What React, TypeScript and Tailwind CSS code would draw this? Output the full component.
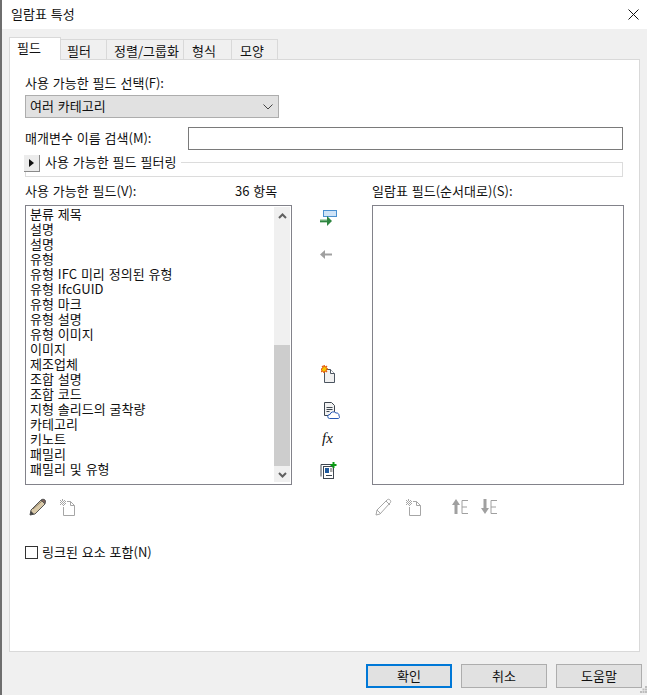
const FONT = "font-['Noto_Sans_CJK_KR','Noto_Sans',sans-serif]";

const availableFields = [
  "분류 제목",
  "설명",
  "설명",
  "유형",
  "유형 IFC 미리 정의된 유형",
  "유형 IfcGUID",
  "유형 마크",
  "유형 설명",
  "유형 이미지",
  "이미지",
  "제조업체",
  "조합 설명",
  "조합 코드",
  "지형 솔리드의 굴착량",
  "카테고리",
  "키노트",
  "패밀리",
  "패밀리 및 유형",
];

const tabs = [
  { label: "필터", width: "w-[47px] pl-[6px]" },
  { label: "정렬/그룹화", width: "w-[78px] pl-[7px]" },
  { label: "형식", width: "w-[49px] pl-[8px]" },
  { label: "모양", width: "w-[47px] pl-[8px]" },
];

function PencilIcon({ muted }: { muted?: boolean }) {
  if (muted) {
    return (
      <svg width="18" height="18" viewBox="0 0 18 18" fill="none">
        <path d="M1 17l1-5L12 2c1-1 2-1 3 0s1 2 0 3L5 16z" stroke="#a6a6a6" fill="#fff" />
        <path d="M2 12l4 4M11 3l4 4" stroke="#a6a6a6" />
      </svg>
    );
  }
  return (
    <svg width="18" height="18" viewBox="0 0 18 18" fill="none">
      <path d="M1 17l1-5L12 2l4 4L6 16z" fill="#d9c9a8" stroke="#555" />
      <path d="M12 2c1-1 3-1 4 0s0 3 0 4z" fill="#7d5f55" stroke="#555" />
      <path d="M4 11L13 3" stroke="#8a7a60" />
      <path d="M1 17l1-4 3 3z" fill="#444" />
    </svg>
  );
}

function DeleteDocIcon() {
  return (
    <svg width="15" height="17" viewBox="0 0 15 17" fill="none">
      <path d="M7 2.500h3.500l4 4v10h-11V8" stroke="#a6a6a6" fill="#fff" />
      <path d="M10.500 2.500v4h4" stroke="#a6a6a6" />
      <path d="M0 1h1v1H0zM2 1h1v1H2zM4 1h1v1H4zM1 2h1v1H1zM3 2h1v1H3zM5 2h1v1H5zM0 3h1v1H0zM2 3h1v1H2zM4 3h1v1H4zM1 4h1v1H1zM3 4h1v1H3zM5 4h1v1H5zM0 5h1v1H0zM2 5h1v1H2zM4 5h1v1H4zM2 0h1v1H2zM3 6h1v1H3z" fill="#a6a6a6" />
    </svg>
  );
}

function MoveUpIcon({ down }: { down?: boolean }) {
  return (
    <svg width="17" height="16" viewBox="0 0 17 16" fill="none">
      {down ? (
        <path d="M2.500 0h3v9H8l-4 6-4-6h2.500z" fill="#a0a0a0" />
      ) : (
        <path d="M4 0l4 6H5.500v9h-3V6H0z" fill="#a0a0a0" />
      )}
      <path d="M16 1.500h-6v13h6M10 8h5" stroke="#a0a0a0" />
    </svg>
  );
}

function IconRow({ children, className }: { children: React.ReactNode; className?: string }) {
  return <div className={`flex items-center ${className ?? ""}`}>{children}</div>;
}

export default function App() {
  return (
    <div className={`relative flex h-[695px] w-[647px] flex-col overflow-hidden border-l-2 border-[#6e6e6e] bg-[#f0f0f0] text-[13px] leading-[15px] text-[#111] [word-spacing:1px] ${FONT}`}>
      <div className="flex h-[29px] shrink-0 items-center justify-between bg-white pb-[2px] pl-[9px] pr-[8px]">
        <span>일람표 특성</span>
        <svg className="mt-[2px]" width="11" height="11" viewBox="0 0 11 11" fill="none">
          <path d="M0.500 0.500l10 10M10.500 0.500l-10 10" stroke="#111" />
        </svg>
      </div>

      <div className="ml-[7px] mt-[8px] flex h-[23px] shrink-0 items-end">
        <div className="relative z-10 flex h-[23px] w-[52px] items-center border border-b-0 border-[#d9d9d9] bg-white pb-[3px] pl-[7px]">
          필드
        </div>
        {tabs.map((tab) => (
          <div
            key={tab.label}
            className={`-ml-px flex h-[21px] items-center border border-b-0 border-[#d9d9d9] bg-[#f0f0f0] ${tab.width}`}
          >
            {tab.label}
          </div>
        ))}
      </div>

      <div className="-mt-px ml-[7px] h-[593px] w-[631px] shrink-0 border border-[#d9d9d9] bg-white pl-[15px] pt-[15px]">
        <p className="h-[15px]">사용 가능한 필드 선택(F):</p>
        <div className="mt-[5px] flex h-[23px] w-[254px] items-center justify-between border border-[#adadad] bg-[#e1e1e1] pl-[4px] pr-[5px]">
          <span className="pb-[2px]">여러 카테고리</span>
          <svg width="10" height="6" viewBox="0 0 10 6" fill="none">
            <path d="M0.500 0.500L5 5l4.500-4.500" stroke="#444" />
          </svg>
        </div>

        <div className="mt-[9px] flex h-[23px] items-center">
          <span className="w-[163px] pb-[2px]">매개변수 이름 검색(M):</span>
          <div className="h-[23px] w-[435px] border border-[#7a7a7a] bg-white" />
        </div>

        <div className="relative mt-[12px] h-[15px] w-[598px]">
          <div className="absolute left-[-1px] top-[-7px] z-10 flex h-[17px] w-[16px] items-center justify-center border-b border-r border-[#8a8a8a] bg-[#ececec]">
            <svg width="5" height="8" viewBox="0 0 5 8">
              <path d="M0 0l5 4-5 4z" fill="#111" />
            </svg>
          </div>
          <div className="absolute left-0 top-0 h-[15px] w-full border border-[#dcdcdc]" />
          <span className="absolute left-[15px] top-[-8px] bg-white px-[5px]">사용 가능한 필드 필터링</span>
        </div>

        <div className="mt-[7px] flex h-[15px] items-center pb-[2px]">
          <span className="w-[210px]">사용 가능한 필드(V):</span>
          <span className="w-[137px]">36 항목</span>
          <span>일람표 필드(순서대로)(S):</span>
        </div>

        <div className="mt-[6px] flex h-[280px] items-stretch">
          <div className="flex w-[267px] justify-between border border-[#82828a] bg-white pl-[4px] pr-[1px]">
            <ul>
              {availableFields.map((field, i) => (
                <li key={i} className="h-[15px] whitespace-nowrap">
                  {field}
                </li>
              ))}
            </ul>
            <div className="mb-[2px] mt-[1px] flex w-[16px] flex-col bg-[#f0f0f0]">
              <div className="flex h-[17px] shrink-0 items-center justify-center">
                <svg width="9" height="6" viewBox="0 0 9 6" fill="none">
                  <path d="M1 5l3.500-3.500L8 5" stroke="#606060" strokeWidth="2" />
                </svg>
              </div>
              <div className="mt-[121px] h-[121px] shrink-0 bg-[#cdcdcd]" />
              <div className="flex h-[17px] shrink-0 items-center justify-center">
                <svg width="9" height="6" viewBox="0 0 9 6" fill="none">
                  <path d="M1 1l3.500 3.500L8 1" stroke="#606060" strokeWidth="2" />
                </svg>
              </div>
            </div>
          </div>

          <div className="flex w-[80px] flex-col pl-[28px]">
            <svg className="mt-[5px]" width="17" height="17" viewBox="0 0 17 17" fill="none">
              <rect x="3.500" y="0.500" width="13" height="6" fill="#cfe3f7" stroke="#4a90d0" />
              <path d="M0 11h9" stroke="#6fae78" strokeWidth="3" />
              <path d="M7 6l5 5-5 5z" fill="#2e8540" />
              <path d="M0 11.500h9" stroke="#2e8540" />
            </svg>
            <svg className="mt-[23px]" width="12" height="9" viewBox="0 0 12 9" fill="none">
              <path d="M5 0v9L0 4.500z" fill="#a0a0a0" />
              <path d="M4 4.500h8" stroke="#a0a0a0" strokeWidth="2" />
            </svg>
            <svg className="ml-[1px] mt-[106px]" width="15" height="18" viewBox="0 0 15 18" fill="none">
              <path d="M3.500 4.500h6l4 4v9h-10z" fill="#f0f0f0" stroke="#4b5560" />
              <path d="M9.500 4.500v4h4" fill="#fff" stroke="#4b5560" />
              <path d="M3 0l1 2 2-1-1 2 2 1-2 1 1 2-2-1-1 2-1-2-2 1 1-2-1-1 2-1-1-2 2 1z" fill="#f7c600" stroke="#e04a00" strokeWidth="0.800" />
            </svg>
            <svg className="ml-[4px] mt-[19px]" width="16" height="17" viewBox="0 0 16 17" fill="none">
              <path d="M0.500 0.500h7l3 3v10h-10z" fill="#f2f2f2" stroke="#3e4650" />
              <path d="M2.500 5.500h6M2.500 7.500h6M2.500 9.500h3" stroke="#3e4650" />
              <path d="M5.500 16.500a2 2 0 0 1 .500-4 3.500 3.500 0 0 1 6-1.500 2.500 2.500 0 0 1 3 3 1.500 1.500 0 0 1-.500 2.500z" fill="#fff" stroke="#2457b5" />
            </svg>
            <span className="ml-[2px] mt-[11px] h-[16px] font-['Liberation_Serif',serif] text-[15px] italic leading-[16px]">fx</span>
            <svg className="mt-[16px]" width="17" height="17" viewBox="0 0 17 17" fill="none">
              <path d="M1 14.500V2.500h10" stroke="#3e4650" />
              <rect x="3.500" y="4.500" width="10" height="12" fill="#fff" stroke="#3e4650" />
              <rect x="5" y="6" width="4" height="5" fill="#1f5a9e" />
              <rect x="10" y="6" width="2.500" height="4" fill="#a9a9a9" />
              <path d="M6 13.500h6" stroke="#3e4650" />
              <path d="M13.500 0v6M10.500 3h6" stroke="#0a9a12" strokeWidth="2" />
            </svg>
          </div>

          <div className="w-[252px] border border-[#82828a] bg-white" />
        </div>

        <div className="mt-[13px] flex h-[18px]">
          <IconRow className="w-[347px] gap-[13px] pl-[4px]">
            <PencilIcon />
            <DeleteDocIcon />
          </IconRow>
          <IconRow className="pl-[3px]">
            <PencilIcon muted />
            <div className="ml-[13px]">
              <DeleteDocIcon />
            </div>
            <div className="ml-[31px]">
              <MoveUpIcon />
            </div>
            <div className="ml-[12px]">
              <MoveUpIcon down />
            </div>
          </IconRow>
        </div>

        <label className="mt-[29px] flex h-[15px] items-center gap-[4px]">
          <span className="h-[13px] w-[13px] border border-[#333] bg-white" />
          <span className="pb-[2px]">링크된 요소 포함(N)</span>
        </label>
      </div>

      <div className="ml-[364px] mt-[12px] flex gap-[9px]">
        <div className="flex h-[24px] w-[86px] items-center justify-center border-2 border-[#0078d7] bg-[#e1e1e1] pb-[2px]">확인</div>
        <div className="flex h-[24px] w-[86px] items-center justify-center border border-[#adadad] bg-[#e1e1e1] pb-[2px]">취소</div>
        <div className="flex h-[24px] w-[86px] items-center justify-center border border-[#adadad] bg-[#e1e1e1] pb-[2px]">도움말</div>
      </div>

      <svg className="absolute bottom-[2px] right-0" width="7" height="7" viewBox="0 0 7 7">
        <path d="M5 0h2v2H5zM2.500 2.500h2v2h-2zM5 2.500h2v2H5zM0 5h2v2H0zM2.500 5h2v2h-2zM5 5h2v2H5z" fill="#bdbdbd" />
      </svg>
    </div>
  );
}
